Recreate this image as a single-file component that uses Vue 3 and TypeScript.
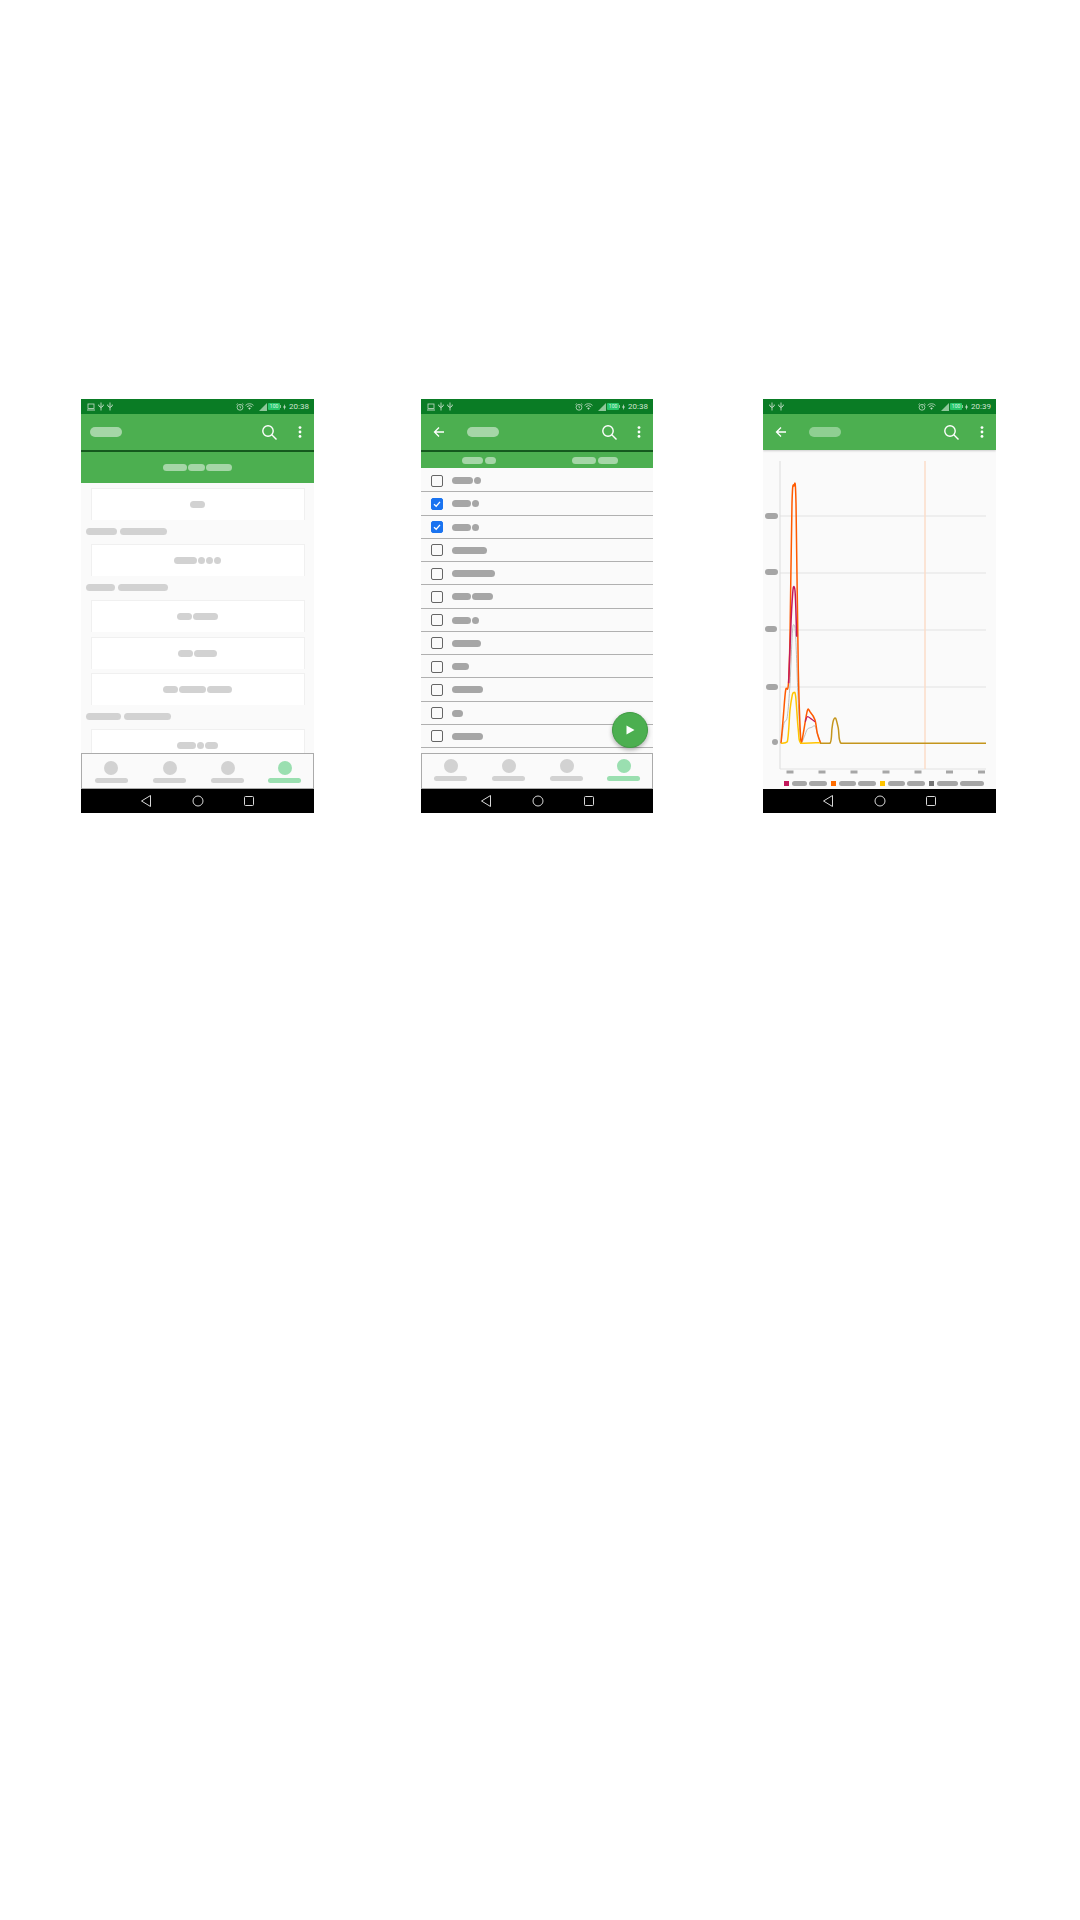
<script setup lang="ts">
import { computed } from 'vue';

type Point = [number, number];

// Cards and section labels of the first screen, widths of the redacted words
const overview: { label?: number[]; words?: number[] }[] = [
  { words: [15] },
  { label: [31, 47] },
  { words: [23, 7, 7, 7] },
  { label: [29, 50] },
  { words: [15, 25] },
  { words: [15, 23] },
  { words: [15, 27, 25] },
  { label: [35, 47] },
  { words: [19, 7, 13] }
];

const rows = [
  { words: [21, 7], checked: false },
  { words: [19, 7], checked: true },
  { words: [19, 7], checked: true },
  { words: [35], checked: false },
  { words: [43], checked: false },
  { words: [19, 21], checked: false },
  { words: [19, 7], checked: false },
  { words: [29], checked: false },
  { words: [17], checked: false },
  { words: [31], checked: false },
  { words: [11], checked: false },
  { words: [31], checked: false }
];

const screens = [
  { id: 'overview', time: '20:38', monitor: true, back: false, divider: true },
  { id: 'list', time: '20:38', monitor: true, back: true, divider: true },
  { id: 'chart', time: '20:39', monitor: false, back: true, divider: false }
];

const legend = [
  { color: '#c2185b', words: [15, 18] },
  { color: '#ff6d00', words: [17, 18] },
  { color: '#ffc400', words: [17, 18] },
  { color: '#757575', words: [21, 24] }
];

const gridLines = [66, 123, 180, 237];
const yLabels = [
  { y: 66, x: 2, w: 13 },
  { y: 122, x: 2, w: 13 },
  { y: 179, x: 2, w: 12 },
  { y: 237, x: 3, w: 12 }
];
const xLabels = [27, 59, 91, 123, 155, 186.5, 218.5];

// Points are read off the reference, chart-crop pixels (3x)
const series: { color: string; width: number; points: Point[] }[] = [
  {
    color: '#bdbdbd',
    width: 1,
    points: [
      [33, 820], [42, 760], [52, 740], [60, 640], [67, 490], [72, 465], [77, 500], [85, 700], [93, 820],
      [103, 800], [112, 778], [125, 772], [135, 768], [142, 790], [152, 820]
    ]
  },
  {
    color: '#ff5a00',
    width: 1.5,
    points: [
      [33, 820], [40, 740], [47, 660], [55, 645], [60, 500], [66, 100], [72, 48], [78, 100], [85, 600], [93, 820],
      [100, 790], [112, 722], [120, 725], [135, 750], [142, 790], [152, 820]
    ]
  },
  {
    color: '#c2185b',
    width: 1.5,
    points: [[56, 640], [62, 480], [68, 370], [72, 350], [76, 375], [80, 500]]
  },
  {
    color: '#c2185b',
    width: 1.2,
    points: [[106, 755], [112, 740], [125, 748], [135, 755]]
  },
  {
    color: '#ffc400',
    width: 1.5,
    points: [
      [33, 820], [52, 815], [60, 720], [67, 675], [72, 668], [77, 680], [85, 780], [93, 820], [150, 818]
    ]
  },
  {
    // third bump and flat tail, all the lines overlap there
    color: '#c4951c',
    width: 1.5,
    points: [[150, 820], [180, 820], [186, 775], [190, 752], [197, 745], [205, 775], [213, 820], [648, 820]]
  }
];

const toChart = ([x, y]: Point): Point => [7 + x / 3, 20 + y / 3];

const clamp = (v: number, lo: number, hi: number) => Math.min(Math.max(v, lo), hi);

// Catmull-Rom through the points, gives the soft peaks of the chart
const smoothPath = (points: Point[]) => {
  const p = points.map(toChart);
  let d = `M${p[0][0]} ${p[0][1]}`;
  for (let i = 0; i < p.length - 1; i++) {
    const a = p[Math.max(i - 1, 0)];
    const b = p[i];
    const c = p[i + 1];
    const e = p[Math.min(i + 2, p.length - 1)];
    // controls stay inside the segment, long flat runs would overshoot otherwise
    const c1x = clamp(b[0] + (c[0] - a[0]) / 6, b[0], c[0]);
    const c1y = Math.min(b[1] + (c[1] - a[1]) / 6, 293.4);
    const c2x = clamp(c[0] - (e[0] - b[0]) / 6, b[0], c[0]);
    const c2y = Math.min(c[1] - (e[1] - b[1]) / 6, 293.4);
    d += ` C${c1x.toFixed(1)} ${c1y.toFixed(1)} ${c2x.toFixed(1)} ${c2y.toFixed(1)} ${c[0].toFixed(1)} ${c[1].toFixed(1)}`;
  }
  return d;
};

const lines = computed(() => series.map(s => ({ ...s, d: smoothPath(s.points) })));
</script>

<template>
  <div class="page">
    <section v-for="screen in screens" :key="screen.id" class="phone" :class="`phone-${screen.id}`">
      <!-- status bar -->
      <div class="status">
        <div class="status-left">
          <svg v-if="screen.monitor" width="8" height="8" viewBox="0 0 8 8" fill="none" stroke="#c5dfc9">
            <rect x="1" y="1" width="6" height="4.5" stroke-width=".8" />
            <path d="M0 7h8" stroke-width=".9" />
          </svg>
          <svg v-for="n in 2" :key="n" width="6" height="9" viewBox="0 0 6 9" fill="none" stroke="#c5dfc9" stroke-width=".9">
            <path d="M3 0.5V8.5M.8 2.5V4L3 5.5 5.2 4V2.5" />
          </svg>
        </div>
        <div class="status-right">
          <svg width="8" height="8" viewBox="0 0 8 8" fill="none" stroke="#c5dfc9" stroke-width=".8">
            <circle cx="4" cy="4.3" r="2.9" />
            <path d="M4 2.6V4.4L5 5M.5 1.6 1.8.6M7.5 1.6 6.2.6" />
          </svg>
          <svg class="wifi" width="9" height="8" viewBox="0 0 9 8" fill="none" stroke="#c5dfc9" stroke-width=".8">
            <path d="M.5 2.4a5.6 5.6 0 0 1 8 0M1.9 3.9a3.6 3.6 0 0 1 5.2 0" />
            <path d="M3.2 5.3a1.8 1.8 0 0 1 2.6 0L4.5 6.8Z" fill="#c5dfc9" stroke="none" />
          </svg>
          <svg class="signal" width="8" height="8" viewBox="0 0 8 8">
            <path d="M0 8 8 0V8Z" fill="#8fc79a" />
          </svg>
          <span class="battery">100</span>
          <span class="battery-cap"></span>
          <svg class="bolt" width="3" height="6" viewBox="0 0 3 6">
            <path d="M2 0 0 3.4H1.2L1 6 3 2.6H1.8Z" fill="#c5dfc9" />
          </svg>
          <span class="time">{{ screen.time }}</span>
        </div>
      </div>

      <!-- toolbar -->
      <header class="toolbar" :class="{ divided: screen.divider }">
        <svg v-if="screen.back" class="back" width="12" height="12" viewBox="0 0 12 12" fill="none" stroke="#fff" stroke-width="1.3">
          <path d="M11 6H1.5M6 1.5 1.5 6 6 10.5" />
        </svg>
        <span class="title"></span>
        <svg class="search" width="15" height="15" viewBox="0 0 15 15" fill="none" stroke="#fff" stroke-width="1.4">
          <circle cx="6" cy="6" r="5.2" />
          <path d="M9.8 9.8 14.5 14.5" />
        </svg>
        <svg class="more" width="4" height="12" viewBox="0 0 4 12" fill="#fff">
          <circle cx="2" cy="1.6" r="1.4" />
          <circle cx="2" cy="6" r="1.4" />
          <circle cx="2" cy="10.4" r="1.4" />
        </svg>
      </header>

      <!-- first screen -->
      <template v-if="screen.id === 'overview'">
        <div class="band">
          <span class="pill tab-pill" style="width: 24px"></span>
          <span class="pill tab-pill" style="width: 17px"></span>
          <span class="pill tab-pill" style="width: 26px"></span>
        </div>
        <div class="cards">
          <template v-for="(item, i) in overview" :key="i">
            <div v-if="item.label" class="section-label">
              <span v-for="(w, j) in item.label" :key="j" class="pill soft" :style="{ width: `${w}px` }"></span>
            </div>
            <div v-else class="card">
              <span v-for="(w, j) in item.words" :key="j" class="pill soft" :style="{ width: `${w}px` }"></span>
            </div>
          </template>
        </div>
      </template>

      <!-- second screen -->
      <template v-else-if="screen.id === 'list'">
        <div class="tabs">
          <div class="tab">
            <span class="pill tab-pill" style="width: 21px"></span>
            <span class="pill tab-pill" style="width: 11px"></span>
          </div>
          <div class="tab">
            <span class="pill tab-pill" style="width: 24px"></span>
            <span class="pill tab-pill" style="width: 20px"></span>
          </div>
        </div>
        <div class="list">
          <div v-for="(row, i) in rows" :key="i" class="row">
            <span class="checkbox" :class="{ checked: row.checked }">
              <svg v-if="row.checked" width="10" height="10" viewBox="0 0 10 10" fill="none" stroke="#fff" stroke-width="1.3">
                <path d="M2 5.2 4.2 7.2 8 2.8" />
              </svg>
            </span>
            <span class="row-words">
              <span v-for="(w, j) in row.words" :key="j" class="pill strong" :style="{ width: `${w}px` }"></span>
            </span>
          </div>
        </div>
        <button class="fab" type="button">
          <svg width="9" height="10" viewBox="0 0 9 10"><path d="M.5 .5 8.5 5 .5 9.5Z" fill="#fff" /></svg>
        </button>
      </template>

      <!-- third screen -->
      <div v-else class="chart-area">
        <svg class="chart" width="233" height="328" viewBox="0 0 233 328" fill="none">
          <line v-for="y in gridLines" :key="y" x1="17" x2="223" :y1="y" :y2="y" stroke="#e2e2e2" />
          <line x1="17" x2="17" y1="11" y2="319" stroke="#dcdcdc" />
          <line x1="17" x2="223" y1="319" y2="319" stroke="#e2e2e2" />
          <line x1="162" x2="162" y1="11" y2="319" stroke="#fbdcc8" stroke-width="1.5" />
          <path v-for="(line, i) in lines" :key="i" :d="line.d" :stroke="line.color" :stroke-width="line.width" />
          <rect v-for="l in yLabels" :key="l.y" :x="l.x" :y="l.y - 3" :width="l.w" height="6" rx="3" fill="#a6a6a6" />
          <circle cx="12" cy="292" r="3" fill="#a6a6a6" />
          <rect v-for="x in xLabels" :key="x" :x="x - 3.5" y="320.5" width="7" height="3" fill="#a6a6a6" />
        </svg>
        <div class="legend">
          <div v-for="entry in legend" :key="entry.color" class="legend-entry">
            <span class="swatch" :style="{ background: entry.color }"></span>
            <span v-for="(w, j) in entry.words" :key="j" class="pill legend-pill" :style="{ width: `${w}px` }"></span>
          </div>
        </div>
      </div>

      <!-- bottom tabs -->
      <nav v-if="screen.id !== 'chart'" class="bottom-nav">
        <div v-for="n in 4" :key="n" class="nav-item" :class="{ active: n === 4 }">
          <span class="dot"></span>
          <span class="nav-label"></span>
        </div>
      </nav>

      <!-- android buttons -->
      <svg class="soft-keys" width="233" height="24" viewBox="0 0 233 24" fill="none" stroke="#d8d8d8" stroke-width="1">
        <path d="M69.5 6.5V17.5L60.5 12Z" stroke-linejoin="round" />
        <circle cx="117" cy="12" r="5" />
        <rect x="163.5" y="7.5" width="9" height="9" rx="1" />
      </svg>
    </section>
  </div>
</template>

<style scoped>
.page {
  display: flex;
  align-items: flex-start;
  box-sizing: border-box;
  height: 1920px;
  padding: 399px 0 0 81px;
  background: #fff;
  font-family: Roboto, "Liberation Sans", sans-serif;
}

.phone {
  position: relative;
  display: flex;
  flex-direction: column;
  flex: none;
  width: 233px;
  height: 414px;
  overflow: hidden;
  background: #fafafa;
}

.phone-list {
  width: 232px;
  margin-left: 107px;
}

.phone-chart {
  margin-left: 110px;
}

.status {
  display: flex;
  flex: none;
  align-items: center;
  justify-content: space-between;
  height: 15px;
  padding: 0 5px 0 6px;
  background: #0a7c25;
}

.status-left,
.status-right {
  display: flex;
  align-items: center;
}

.status-left {
  gap: 3px;
}

.wifi {
  margin-left: 1px;
}

.signal {
  margin-left: 5px;
}

.battery {
  width: 12px;
  height: 7px;
  margin-left: 1px;
  border-radius: 1px;
  background: #27c76a;
  color: #d8f5e0;
  font-size: 5px;
  line-height: 7px;
  text-align: center;
}

.battery-cap {
  width: 1px;
  height: 3px;
  background: #8fc79a;
}

.bolt {
  margin-left: 2px;
}

.time {
  margin-left: 3px;
  color: #cfe6d2;
  font-size: 8px;
  line-height: 15px;
}

.toolbar {
  display: flex;
  flex: none;
  align-items: center;
  box-sizing: border-box;
  height: 36px;
  padding: 0 12px 0 9px;
  background: #4caf50;
  box-shadow: 0 1px 2px rgba(0, 0, 0, 0.18);
}

.toolbar.divided {
  height: 38px;
  border-bottom: 2px solid #14591d;
  box-shadow: none;
}

.back {
  margin-left: 3px;
  margin-right: 22px;
}

.title {
  width: 32px;
  height: 10px;
  border-radius: 5px;
  background: #a5d6a7;
}

.phone-chart .title {
  background: #8fcf92;
}

.search {
  margin-left: auto;
}

.more {
  margin-left: 21px;
}

.phone-list .more {
  margin-left: 20px;
}

.band {
  display: flex;
  flex: none;
  align-items: center;
  justify-content: center;
  gap: 1px;
  height: 31px;
  background: #4caf50;
}

.pill {
  display: inline-block;
  flex: none;
  height: 7px;
  border-radius: 4px;
}

.tab-pill {
  background: #a5d6a7;
}

.soft {
  background: #d2d2d2;
}

.strong {
  background: #a6a6a6;
}

.cards {
  display: flex;
  flex: 1;
  flex-direction: column;
  gap: 4.5px;
  min-height: 0;
  padding: 5px 9px 0 10px;
  overflow: hidden;
}

.card {
  display: flex;
  flex: none;
  align-items: center;
  justify-content: center;
  gap: 1px;
  box-sizing: border-box;
  height: 32px;
  padding-right: 2px;
  border: 1px solid #f0f0f0;
  border-bottom: 0;
  background: #fff;
}

.section-label {
  display: flex;
  flex: none;
  align-items: center;
  gap: 3px;
  height: 13px;
  margin: 0 0 2px -5px;
}

.tabs {
  display: grid;
  flex: none;
  grid-template-columns: 1fr 1fr;
  height: 16px;
  background: #4caf50;
}

.tab {
  display: flex;
  align-items: center;
  justify-content: center;
  gap: 2px;
}

.list {
  flex: 1;
  min-height: 0;
  padding-top: 1px;
}

.row {
  display: flex;
  align-items: center;
  gap: 9px;
  box-sizing: border-box;
  height: 23.25px;
  padding: 1px 0 0 10px;
  border-bottom: 1.5px solid #b0b0b0;
}

.checkbox {
  display: flex;
  align-items: center;
  justify-content: center;
  box-sizing: border-box;
  width: 12px;
  height: 12px;
  border: 1.5px solid #666;
  border-radius: 2px;
}

.checkbox.checked {
  border-color: #1a73f0;
  background: #1a73f0;
}

.row-words {
  display: flex;
  gap: 1px;
}

.fab {
  position: absolute;
  top: 313px;
  left: 191px;
  display: flex;
  align-items: center;
  justify-content: center;
  width: 36px;
  height: 36px;
  padding: 0 0 0 1px;
  border: 1px solid #3f9c43;
  border-radius: 50%;
  background: #4caf50;
  box-shadow: 0 2px 4px rgba(0, 0, 0, 0.3);
}

.chart-area {
  display: flex;
  flex: 1;
  flex-direction: column;
  min-height: 0;
}

.chart {
  display: block;
  flex: none;
}

.legend {
  display: flex;
  gap: 4px;
  align-items: center;
  height: 11px;
  padding-left: 21px;
}

.legend-entry {
  display: flex;
  align-items: center;
  gap: 2px;
}

.swatch {
  flex: none;
  width: 5px;
  height: 5px;
  margin-right: 1px;
}

.legend-pill {
  height: 5px;
  border-radius: 3px;
  background: #a6a6a6;
}

.bottom-nav {
  display: grid;
  flex: none;
  grid-template-columns: 58px 59px 57px 57px;
  box-sizing: border-box;
  height: 36px;
  border: 1px solid #ababab;
  background: #fafafa;
}

.phone-list .bottom-nav {
  grid-template-columns: 57px 59px 57px 57px;
}

.nav-item {
  display: flex;
  flex-direction: column;
  align-items: center;
  gap: 3px;
  padding-top: 7px;
}

.dot {
  flex: none;
  width: 14px;
  height: 14px;
  border-radius: 50%;
  background: #d2d2d2;
}

.nav-label {
  flex: none;
  width: 33px;
  height: 5px;
  border-radius: 3px;
  background: #d2d2d2;
}

.active .dot,
.active .nav-label {
  background: #9adfb0;
}

.phone-list .nav-item {
  padding-top: 5px;
}

.soft-keys {
  display: block;
  flex: none;
  background: #000;
}
</style>

<style>
html,
body {
  background: #fff;
}
</style>
